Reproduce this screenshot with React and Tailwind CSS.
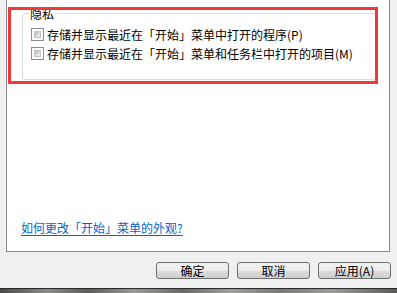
import React from 'react';

const Checkbox = () => (
  <div className="w-[13px] h-[13px] shrink-0 border border-[#8e8f8f] bg-white p-[2px]">
    <div className="w-full h-full border border-[#c4c4c4] bg-[linear-gradient(135deg,#b9b9b9,#dedede_60%,#f4f4f4)]" />
  </div>
);

const Row = ({ label }) => (
  <div className="flex items-center h-[13px] gap-[3px]">
    <Checkbox />
    <span className="leading-[14px] whitespace-nowrap">{label}</span>
  </div>
);

const Button = ({ children }) => (
  <button className="w-[73px] h-[17px] border border-[#707070] rounded-[3px] bg-[linear-gradient(180deg,#f2f2f2_0%,#ebebeb_50%,#dddddd_50%,#cfcfcf_100%)] text-[12px] leading-[14px] text-black flex items-center justify-center">
    {children}
  </button>
);

export default function App() {
  return (
    <div className="relative w-[397px] h-[293px] bg-[#f0f0f0] flex flex-col overflow-hidden text-[12px] text-black font-['Noto_Sans_CJK_SC','Microsoft_YaHei',sans-serif]">
      <div className="ml-[6px] w-[384px] h-[252px] shrink-0 border-x border-b border-[#898c95] bg-white flex flex-col">
        <div className="relative mt-[13px] ml-[15px] w-[354px] h-[67px] border border-[#d5dfe5] rounded-[3px] pt-[14px] pl-[8px] flex flex-col gap-[6px]">
          <span className="absolute -top-[7px] left-[6px] bg-white px-[1px] leading-[14px]">隐私</span>
          <Row label="存储并显示最近在「开始」菜单中打开的程序(P)" />
          <Row label="存储并显示最近在「开始」菜单和任务栏中打开的项目(M)" />
        </div>
        <div className="mt-auto mb-[14px] ml-[14px]">
          <a href="#" className="text-[#0066cc] underline underline-offset-[2px] leading-[14px]">
            如何更改「开始」菜单的外观?
          </a>
        </div>
      </div>

      <div className="mt-[10px] flex justify-end gap-[8px] pr-[6px]">
        <Button>确定</Button>
        <Button>取消</Button>
        <Button>应用(A)</Button>
      </div>

      <div className="mt-auto h-[5px] border-t border-[#2a2a2a] bg-[linear-gradient(90deg,#4a4a48,#8c8c82_12%,#5c5c58_22%,#9a9a8e_34%,#6a6a64_46%,#a0a096_58%,#7a7a72_70%,#9c9c92_84%,#5a5a56)]" />

      <div className="absolute left-[8px] top-[7px] w-[370px] h-[77px] border-[3px] border-[#f03a3a] pointer-events-none" />
    </div>
  );
}
